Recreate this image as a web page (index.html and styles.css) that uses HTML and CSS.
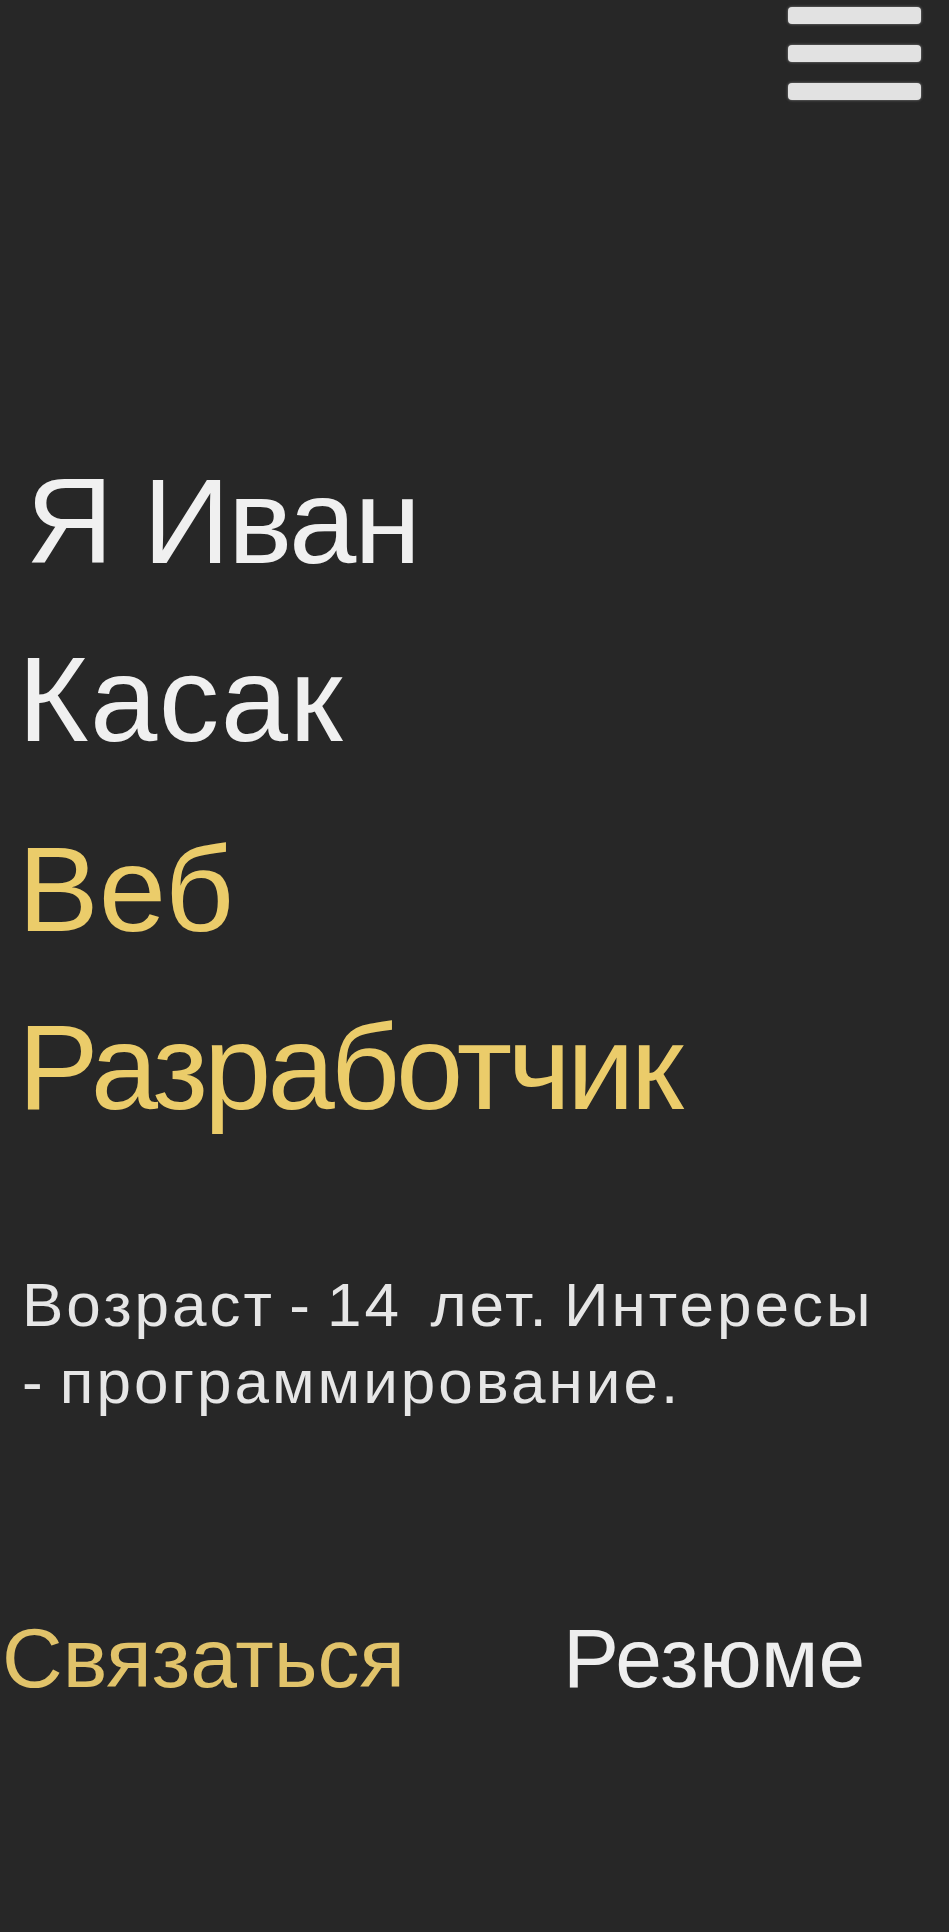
FILE: index.html
```html
<!DOCTYPE html>
<html lang="ru">
<head>
<meta charset="utf-8">
<title>Иван Касак</title>
<link rel="stylesheet" href="styles.css">
</head>
<body>
<div class="page">
  <header class="topbar">
    <button class="burger" aria-label="Меню">
      <span class="bar"></span>
      <span class="bar"></span>
      <span class="bar"></span>
    </button>
  </header>
  <main class="hero">
    <h1 class="title">
      <span class="line line-first">Я Иван</span>
      <span class="line line-wide">Касак</span>
      <span class="line accent line-gap">Веб</span>
      <span class="line accent line-tight">Разработчик</span>
    </h1>
    <p class="about">Возраст - 14&nbsp; лет. Интересы - программирование.</p>
    <nav class="actions">
      <a class="action action-primary" href="#contact">Связаться</a>
      <a class="action" href="#resume">Резюме</a>
    </nav>
  </main>
</div>
</body>
</html>
```
FILE: styles.css
```css
html, body {
  margin: 0;
  padding: 0;
  background: #272727;
}
body {
  font-family: "Liberation Sans", Arial, sans-serif;
  color: #f0f0f0;
  width: 949px;
  min-height: 1932px;
}
.page {
  display: flex;
  flex-direction: column;
}
.topbar {
  display: flex;
  justify-content: flex-end;
  padding: 7px 28px 0 0;
}
.burger {
  display: flex;
  flex-direction: column;
  gap: 21px;
  padding: 0;
  margin: 0;
  border: 0;
  background: transparent;
  cursor: pointer;
}
.bar {
  display: block;
  width: 133px;
  height: 17px;
  border-radius: 4px;
  background: #e2e2e2;
  box-shadow: 0 0 3px rgba(226, 226, 226, 0.5);
}
.hero {
  display: flex;
  flex-direction: column;
  padding-left: 18px;
}
.title {
  margin: 332px 0 0 0;
  font-weight: 400;
  font-size: 121px;
  line-height: 178px;
  display: flex;
  flex-direction: column;
}
.line { display: block; }
.line-first { padding-left: 8px; letter-spacing: -2px; }
.line-wide { letter-spacing: 1.5px; }
.line-tight { letter-spacing: -4px; }
.line-gap { margin-top: 12px; }
.accent { color: #ebcc6a; }
.about {
  margin: 110px 0 0 4px;
  width: 858px;
  font-size: 62px;
  line-height: 77px;
  letter-spacing: 3px;
  word-spacing: -6px;
  color: #e6e6e6;
}
.actions {
  display: flex;
  gap: 158px;
  margin: 188px 0 0 -16px;
}
.action {
  font-size: 84px;
  line-height: 100px;
  color: #eeeeee;
  text-decoration: none;
}
.action-primary { color: #e1c36a; }
```
